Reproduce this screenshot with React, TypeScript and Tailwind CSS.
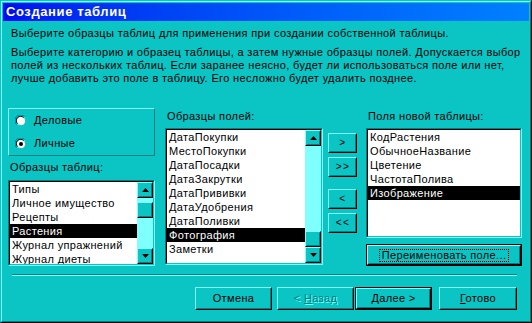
import React from "react";

const font = { fontFamily: '"Liberation Sans", Arial, sans-serif' };

function Raised({ className = "", children, def = false }: { className?: string; children?: React.ReactNode; def?: boolean }) {
  const inner = (
    <div className="w-full h-full border border-t-[#80ffff] border-l-[#80ffff] border-r-black border-b-black">
      <div className="w-full h-full border border-t-[#0bc4c4] border-l-[#0bc4c4] border-r-[#008080] border-b-[#008080] flex items-center justify-center bg-[#0bc4c4]">
        {children}
      </div>
    </div>
  );
  if (def) {
    return <div className={"border border-black " + className}>{inner}</div>;
  }
  return <div className={className}>{inner}</div>;
}

function Arrow({ up }: { up: boolean }) {
  return (
    <svg width="7" height="4" viewBox="0 0 7 4" className="block">
      {up ? <polygon points="3.5,0 7,4 0,4" fill="black" /> : <polygon points="0,0 7,0 3.5,4" fill="black" />}
    </svg>
  );
}

function ScrollBtn({ up }: { up: boolean }) {
  return (
    <Raised className="w-[16px] h-[16px] shrink-0">
      <Arrow up={up} />
    </Raised>
  );
}

function ListBox({
  items,
  selected,
  className,
  scroll,
}: {
  items: string[];
  selected: number;
  className: string;
  scroll?: "top" | "bottom";
}) {
  return (
    <div className={"border border-t-[#008080] border-l-[#008080] border-r-[#80ffff] border-b-[#80ffff] " + className}>
      <div className="w-full h-full border border-t-black border-l-black border-r-[#0bc4c4] border-b-[#0bc4c4] bg-white flex overflow-hidden">
        <div className="flex-1 overflow-hidden">
          {items.map((it, i) => (
            <div
              key={it}
              className={
                "h-[14px] leading-[14px] pl-[2px] text-[11px] whitespace-nowrap " +
                (i === selected ? "bg-black text-white" : "text-black")
              }
            >
              {it}
            </div>
          ))}
        </div>
        {scroll && (
          <div className="w-[16px] h-full bg-[#80ffff] flex flex-col">
            <ScrollBtn up={true} />
            {scroll === "top" ? (
              <>
                <div className="h-[4px]" />
                <Raised className="w-[16px] h-[16px]" />
                <div className="flex-1" />
              </>
            ) : (
              <>
                <div className="flex-1" />
                <Raised className="w-[16px] h-[16px]" />
              </>
            )}
            <ScrollBtn up={false} />
          </div>
        )}
      </div>
    </div>
  );
}

function Radio({ checked, label }: { checked: boolean; label: string }) {
  return (
    <div className="flex items-center h-[14px]">
      <svg width="12" height="12" viewBox="0 0 12 12" className="block ml-[6px]">
        <path d="M1.5 9.5 A5.5 5.5 0 0 1 9.5 1.5" fill="none" stroke="#008080" strokeWidth="1" />
        <path d="M2.5 9.5 A5.5 5.5 0 0 0 9.5 2.5" fill="none" stroke="#80ffff" strokeWidth="1" />
        <circle cx="6" cy="6" r="4.5" fill="white" stroke="none" />
        <path d="M2.6 8.6 A4 4 0 0 1 8.6 2.6" fill="none" stroke="black" strokeWidth="1" />
        <path d="M3.4 9.4 A4 4 0 0 0 9.4 3.4" fill="none" stroke="#0bc4c4" strokeWidth="1" />
        {checked && <circle cx="6" cy="6" r="2" fill="black" />}
      </svg>
      <span className="ml-[7px] text-[11px] text-black">{label}</span>
    </div>
  );
}

function SmallBtn({ label }: { label: string }) {
  return (
    <Raised className="w-[29px] h-[20px]">
      <span className="text-[10px] text-black leading-none tracking-[1.5px] pl-[1px]">{label}</span>
    </Raised>
  );
}

export default function App() {
  return (
    <div style={font} className="w-[532px] h-[323px] bg-[#0bc4c4] select-none tracking-[0.35px]">
      <div className="w-full h-full border border-t-[#0bc4c4] border-l-[#0bc4c4] border-r-black border-b-black">
        <div className="w-full h-full border border-t-[#80ffff] border-l-[#80ffff] border-r-[#008080] border-b-[#008080] p-[1px] flex flex-col">
          <div className="h-[18px] bg-gradient-to-r from-[#0008f0] to-[#0080ff] flex items-center pl-[3px]">
            <span className="text-white font-bold text-[13px] tracking-[0.6px]">Создание таблиц</span>
          </div>

          <div className="mt-[6px] ml-[8px] text-[11px] leading-[13px] text-black whitespace-nowrap">
            Выберите образцы таблиц для применения при создании собственной таблицы.
          </div>
          <div className="mt-[6px] ml-[8px] text-[11px] leading-[13px] text-black whitespace-nowrap">
            <div>Выберите категорию и образец таблицы, а затем нужные образцы полей. Допускается выбор</div>
            <div>полей из нескольких таблиц. Если заранее неясно, будет ли использоваться поле или нет,</div>
            <div>лучше добавить это поле в таблицу. Его несложно будет удалить позднее.</div>
          </div>

          <div className="mt-[23px] ml-[5px] flex">
            <div className="w-[147px] flex flex-col">
              <div className="h-[48px] border border-t-[#80ffff] border-l-[#80ffff] border-r-[#008080] border-b-[#008080] flex flex-col justify-center gap-[9px]">
                <Radio checked={false} label="Деловые" />
                <Radio checked={true} label="Личные" />
              </div>
              <div className="mt-[5px] ml-[2px] text-[11px] leading-[13px] text-black">Образцы таблиц:</div>
              <ListBox
                className="mt-[6px] h-[86px] w-[147px]"
                items={["Типы", "Личное имущество", "Рецепты", "Растения", "Журнал упражнений", "Журнал диеты"]}
                selected={3}
                scroll="top"
              />
            </div>

            <div className="ml-[10px] w-[158px] flex flex-col">
              <div className="mt-[2px] ml-[2px] text-[11px] leading-[13px] text-black">Образцы полей:</div>
              <ListBox
                className="mt-[5px] h-[137px] w-[158px]"
                items={[
                  "ДатаПокупки",
                  "МестоПокупки",
                  "ДатаПосадки",
                  "ДатаЗакрутки",
                  "ДатаПрививки",
                  "ДатаУдобрения",
                  "ДатаПоливки",
                  "Фотография",
                  "Заметки",
                ]}
                selected={7}
                scroll="bottom"
              />
            </div>

            <div className="ml-[5px] mt-[25px] flex flex-col">
              <SmallBtn label=">" />
              <div className="h-[4px]" />
              <SmallBtn label=">>" />
              <div className="h-[12px]" />
              <SmallBtn label="<" />
              <div className="h-[4px]" />
              <SmallBtn label="<<" />
            </div>

            <div className="ml-[9px] w-[156px] flex flex-col">
              <div className="mt-[2px] ml-[2px] text-[11px] leading-[13px] text-black">Поля новой таблицы:</div>
              <ListBox
                className="mt-[5px] h-[110px] w-[156px]"
                items={["КодРастения", "ОбычноеНазвание", "Цветение", "ЧастотаПолива", "Изображение"]}
                selected={4}
              />
              <Raised def className="mt-[6px] w-[156px] h-[22px]">
                <span className="text-[11px] text-black border border-dotted border-black px-[2px] leading-[11px]">
                  Переименовать поле...
                </span>
              </Raised>
            </div>
          </div>

          <div className="mt-[8px] ml-[9px] w-[505px] h-[2px] border-t border-t-[#008080] border-b border-b-[#80ffff]" />

          <div className="mt-[11px] ml-[192px] flex">
            <Raised className="w-[77px] h-[23px]">
              <span className="text-[11px] text-black">Отмена</span>
            </Raised>
            <Raised className="ml-[5px] w-[77px] h-[23px]">
              <span className="text-[11px] text-[#008080] [text-shadow:1px_1px_0_#80ffff]">
                &lt; <span className="underline">Н</span>азад
              </span>
            </Raised>
            <Raised def className="ml-[1px] w-[77px] h-[23px]">
              <span className="text-[11px] text-black">
                <span className="underline">Д</span>алее &gt;
              </span>
            </Raised>
            <Raised className="ml-[7px] w-[78px] h-[23px]">
              <span className="text-[11px] text-black">
                <span className="underline">Г</span>отово
              </span>
            </Raised>
          </div>
        </div>
      </div>
    </div>
  );
}
